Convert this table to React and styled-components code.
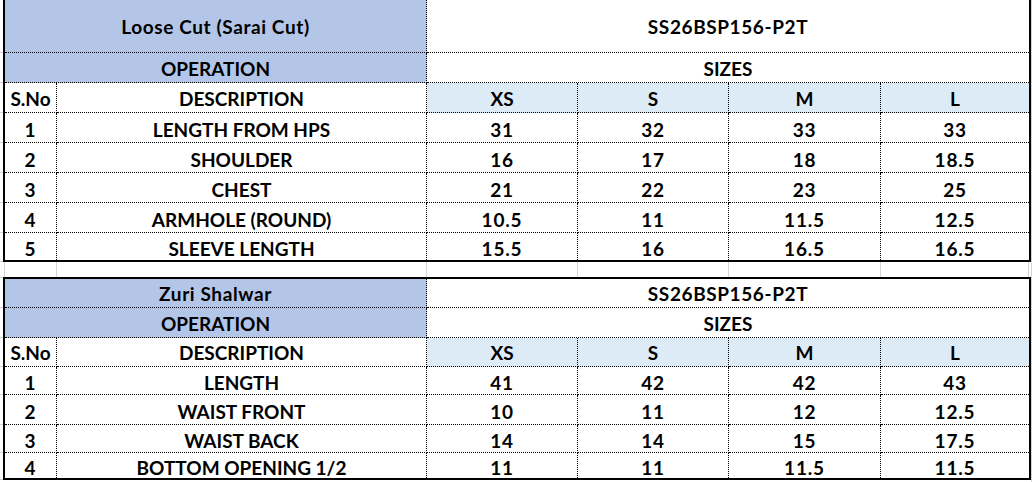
import React from "react";
import styled, { createGlobalStyle, css } from "styled-components";

const GlobalStyle = createGlobalStyle`
  html, body { margin: 0; padding: 0; background: #ffffff; }
  body { font-family: Lato, "Open Sans", "Liberation Sans", sans-serif; color: #000; }
  * { box-sizing: border-box; }
`;

const COLS = "52px 370px 151px 151px 152px 148px";
const BLUE = "#b4c6e7";
const LIGHT = "#ddebf7";
const GRID = "#d4d4d4";

const Sheet = styled.div`
  display: flex;
  width: 1032px;
  height: 482px;
  overflow: hidden;
`;

const Gutter = styled.div`
  flex: none;
  width: 3px;
  display: flex;
  flex-direction: column;
  margin-top: -2px;
`;

const GutterLine = styled.div`
  flex: none;
  height: ${(p) => p.$h}px;
  border-bottom: 1px solid ${GRID};
`;

const Body = styled.div`
  flex: none;
  width: 1028px;
  display: flex;
  flex-direction: column;
  margin-top: -2px;
`;

const RightEdge = styled.div`
  flex: none;
  width: 1px;
  background: ${GRID};
`;

const Table = styled.div`
  border: 2px solid #000;
  display: flex;
  flex-direction: column;
`;

const Row = styled.div`
  display: grid;
  grid-template-columns: ${COLS};
  height: ${(p) => p.$h}px;
  ${(p) =>
    !p.$last &&
    css`
      & > div {
        border-bottom: 1px dotted #000;
      }
    `}
`;

const Cell = styled.div`
  grid-column: span ${(p) => p.$span || 1};
  display: flex;
  align-items: center;
  justify-content: center;
  padding-top: ${(p) => (p.$shift == null ? 3 : p.$shift)}px;
  background: ${(p) => p.$fill || "#ffffff"};
  font-weight: 700;
  font-size: 19px;
  letter-spacing: ${(p) => p.$track || 0}px;
  line-height: 1;
  white-space: nowrap;
  &:not(:last-child) {
    border-right: 1px dotted #000;
  }
`;

const GapRow = styled.div`
  display: grid;
  grid-template-columns: 2px ${COLS} 2px;
  height: 15px;
`;

const GapCell = styled.div`
  border-right: 1px solid ${GRID};
  &:last-child {
    border-right: none;
  }
`;

const SIZES = ["XS", "S", "M", "L"];

const TABLES = [
  {
    title: "Loose Cut (Sarai Cut)",
    code: "SS26BSP156-P2T",
    head: [53, 30, 30],
    titleShift: 1,
    rows: [
      ["1", "LENGTH FROM HPS", "31", "32", "33", "33", 30],
      ["2", "SHOULDER", "16", "17", "18", "18.5", 30],
      ["3", "CHEST", "21", "22", "23", "25", 30],
      ["4", "ARMHOLE (ROUND)", "10.5", "11", "11.5", "12.5", 30],
      ["5", "SLEEVE LENGTH", "15.5", "16", "16.5", "16.5", 27],
    ],
  },
  {
    title: "Zuri Shalwar",
    code: "SS26BSP156-P2T",
    head: [29, 30, 29],
    titleShift: 1,
    rows: [
      ["1", "LENGTH", "41", "42", "42", "43", 28],
      ["2", "WAIST FRONT", "10", "11", "12", "12.5", 30],
      ["3", "WAIST BACK", "14", "14", "15", "17.5", 28],
      ["4", "BOTTOM OPENING 1/2", "11", "11", "11.5", "11.5", 25],
    ],
  },
];

const GUTTER = [55, 30, 30, 30, 30, 30, 30, 29, 16, 30, 30, 29, 28, 30, 28, 27, 10];

function SizeTable({ data }) {
  const last = data.rows.length - 1;
  return (
    <Table>
      <Row $h={data.head[0]}>
        <Cell $span={2} $fill={BLUE} $shift={data.titleShift} $track={0.6}>
          {data.title}
        </Cell>
        <Cell $span={4} $shift={data.titleShift} $track={0.6}>
          {data.code}
        </Cell>
      </Row>
      <Row $h={data.head[1]}>
        <Cell $span={2} $fill={BLUE} $shift={1}>
          OPERATION
        </Cell>
        <Cell $span={4} $shift={1}>SIZES</Cell>
      </Row>
      <Row $h={data.head[2]}>
        <Cell $shift={1}>S.No</Cell>
        <Cell $shift={1}>DESCRIPTION</Cell>
        {SIZES.map((s) => (
          <Cell key={s} $fill={LIGHT} $shift={1}>
            {s}
          </Cell>
        ))}
      </Row>
      {data.rows.map((r, i) => (
        <Row key={r[0]} $h={r[6]} $last={i === last}>
          {r.slice(0, 6).map((v, j) => (
            <Cell key={j} $track={j === 1 ? 0 : 0.8}>
              {v}
            </Cell>
          ))}
        </Row>
      ))}
    </Table>
  );
}

export default function App() {
  return (
    <>
      <GlobalStyle />
      <Sheet>
        <Gutter>
          {GUTTER.map((h, i) => (
            <GutterLine key={i} $h={h} />
          ))}
        </Gutter>
        <Body>
          <SizeTable data={TABLES[0]} />
          <GapRow>
            {Array.from({ length: 8 }).map((_, i) => (
              <GapCell key={i} />
            ))}
          </GapRow>
          <SizeTable data={TABLES[1]} />
        </Body>
        <RightEdge />
      </Sheet>
    </>
  );
}
